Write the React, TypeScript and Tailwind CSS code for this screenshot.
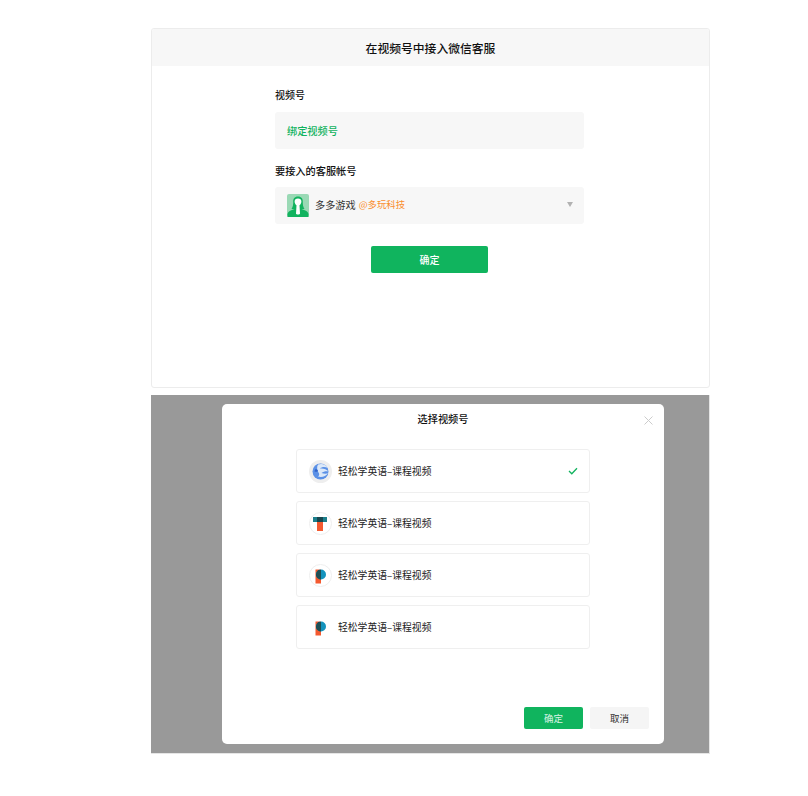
const font = { fontFamily: '"Noto Sans CJK SC", "Liberation Sans", sans-serif' };

const PersonAvatar = () => (
  <svg width="22" height="23" viewBox="0 0 22 23" className="shrink-0">
    <rect width="22" height="23" rx="2" fill="#9ad9b5" />
    <path d="M11 2.500c-3.400 0-5 2.400-4.800 5.200.1 2.300-.2 5-1.700 7.300h13c-1.500-2.300-1.800-5-1.700-7.300C16 4.900 14.400 2.500 11 2.500z" fill="#12b35f" />
    <path d="M.5 23v-2.500c0-2.800 3.500-4.500 7-5.500h7c3.500 1 7 2.700 7 5.500V23z" fill="#12b35f" />
    <path d="M11 4.500c-2.200 0-3.400 1.300-3.400 3 0 1.800 1 3.200 1.900 3.800L9 19.500c0 .8 1 1 2 1s2-.2 2-1l-.5-8.200c.9-.6 1.900-2 1.900-3.800 0-1.700-1.200-3-3.400-3z" fill="#fff" />
  </svg>
);

const WaveAvatar = () => (
  <svg width="23" height="23" viewBox="0 0 23 23">
    <circle cx="11.500" cy="11.500" r="11.500" fill="#eeeeee" />
    <circle cx="11.500" cy="11.500" r="8" fill="#5a90e6" />
    <path d="M9 4.500c4-1.500 8 0 10 3.500-3-1.500-6-1.500-8 .5 3-.5 6.500.5 8.500 3-2.500-.5-5 0-7 1.500 2.500.8 5 .8 6.500.2-2 3.300-6.500 4.500-10 3.300 1.500-1 1.500-2.500.5-4C8 10.500 7.500 7 9 4.500z" fill="#dbe8f8" />
    <path d="M6 9.500c1.500-.5 2.500 0 3 1.500-1 1-2.500 1-3.500.5z" fill="#2f62c9" />
  </svg>
);

const TAvatar = () => (
  <svg width="23" height="23" viewBox="0 0 23 23">
    <circle cx="11.500" cy="11.500" r="11" fill="#fff" stroke="#eeeeee" />
    <rect x="4" y="5" width="14" height="5" fill="#1c7f8c" />
    <rect x="8" y="5" width="6" height="5" fill="#17474f" />
    <rect x="8" y="10" width="6" height="9" fill="#f4592f" />
  </svg>
);

const PAvatar = ({ ring }: { ring?: boolean }) => (
  <svg width="23" height="23" viewBox="0 0 23 23">
    <circle cx="11.500" cy="11.500" r="11" fill="#fff" stroke={ring ? '#eeeeee' : '#fff'} />
    <rect x="6.500" y="5.500" width="5.500" height="14" fill="#f4592f" />
    <circle cx="12" cy="10.500" r="5" fill="#1493bd" />
    <path d="M12 5.500a5 5 0 0 0-3 9V5.900z M9 5.900h3v9.500a5 5 0 0 1-3-.9z" fill="#1f4f55" />
  </svg>
);

const accounts = [
  { id: 1, avatar: <WaveAvatar />, selected: true },
  { id: 2, avatar: <TAvatar /> },
  { id: 3, avatar: <PAvatar ring /> },
  { id: 4, avatar: <PAvatar /> },
];

export default function App() {
  return (
    <div className="min-h-[796px] bg-white pt-[28px] pl-[151px] w-[808px] text-[#111]" style={font}>
      <div className="w-[559px] h-[360px] border border-[#ececec] rounded-[3px] overflow-hidden">
        <div className="h-[37px] bg-[#f7f7f7] flex items-center justify-center text-[11.800px] font-medium">在视频号中接入微信客服</div>
        <div className="w-[309px] ml-[123px] pt-[21px]">
          <div className="text-[10px] leading-[15px] font-medium">视频号</div>
          <div className="mt-[10px] h-[37px] bg-[#f7f7f7] rounded-[3px] flex items-center px-[12px] text-[10.200px] font-medium text-[#12b35f]">绑定视频号</div>
          <div className="mt-[14px] text-[10.200px] leading-[15px] font-medium">要接入的客服帐号</div>
          <div className="mt-[9px] h-[37px] bg-[#f7f7f7] rounded-[3px] flex items-center px-[12px] text-[10px]">
            <PersonAvatar />
            <span className="ml-[6px] mt-[-2px] text-[10.200px] text-[#333]">多多游戏</span>
            <span className="ml-[3px] mt-[-2px] text-[9.400px] text-[#fa8d2b]">@多玩科技</span>
            <span className="ml-auto mr-[-1px] mt-[-3px] w-0 h-0 border-x-[3px] border-t-[5px] border-x-transparent border-t-[#b2b2b2]" />
          </div>
          <div className="mt-[22px] flex justify-center">
            <button className="w-[117px] h-[27px] bg-[#10b45e] rounded-[2px] text-white text-[10px] font-medium">确定</button>
          </div>
        </div>
      </div>

      <div className="mt-[7px] w-[559px] h-[359px] bg-[#999999] border-r border-b border-[#e5e5e5] pt-[9px] pl-[71px]">
        <div className="w-[442px] h-[340px] bg-white rounded-[5px] flex flex-col relative">
          <div className="h-[30px] flex items-center justify-center text-[10.200px] font-medium">选择视频号</div>
          <svg width="9" height="9" viewBox="0 0 9 9" className="absolute top-[12px] right-[11px]">
            <path d="M.5.500l8 8M8.500.500l-8 8" stroke="#cccccc" strokeWidth="1" fill="none" />
          </svg>
          <div className="mt-[15px] mx-[74px] flex flex-col gap-[8px]">
            {accounts.map((a) => (
              <div key={a.id} className="h-[44px] border border-[#efefef] rounded-[3px] flex items-center pl-[12px] pr-[11px]">
                {a.avatar}
                <span className="ml-[6px] text-[9.800px] text-[#222]">轻松学英语–课程视频</span>
                {a.selected && (
                  <svg width="10" height="8" viewBox="0 0 10 8" className="ml-auto">
                    <path d="M1 4l2.800 2.800L9 1.300" stroke="#12b35f" strokeWidth="1.300" fill="none" />
                  </svg>
                )}
              </div>
            ))}
          </div>
          <div className="mt-auto mb-[15px] mr-[15px] flex justify-end gap-[7px]">
            <button className="w-[59px] h-[22px] bg-[#10b45e] rounded-[2px] text-[#d8f3e4] text-[9.500px]">确定</button>
            <button className="w-[59px] h-[22px] bg-[#f5f5f5] rounded-[2px] text-[#333] text-[9.500px]">取消</button>
          </div>
        </div>
      </div>
    </div>
  );
}
